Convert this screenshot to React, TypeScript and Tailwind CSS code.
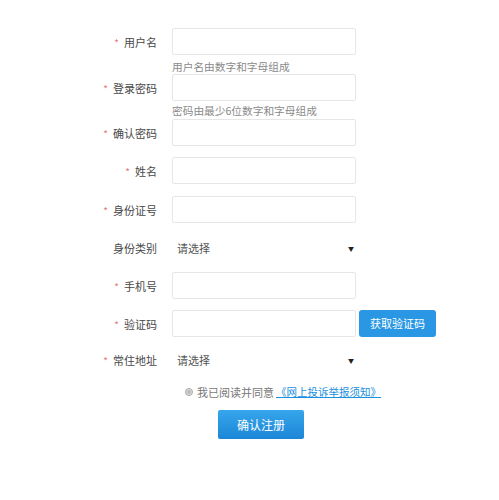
import type { ReactNode } from 'react';

const FONT = { fontFamily: '"Microsoft YaHei", "Noto Sans CJK SC", sans-serif' };

function Label({ text, required = true }: { text: string; required?: boolean }) {
  return (
    <div className="w-[157px] pt-[2px] flex items-center justify-end text-[11px] text-[#484848]">
      {required && <span className="mr-[5px] text-[10px] text-[#e0787a]">*</span>}
      <span>{text}</span>
    </div>
  );
}

function Row({ label, required, mt, children }: { label: string; required?: boolean; mt: string; children: ReactNode }) {
  return (
    <div className={`flex items-center ${mt}`}>
      <Label text={label} required={required} />
      <div className="ml-[15px] flex items-center">{children}</div>
    </div>
  );
}

function Input() {
  return <input className="w-[184px] h-[27px] border border-[#e6e6e6] rounded-[2px] bg-white outline-none" />;
}

function Select() {
  return (
    <div className="w-[184px] h-[27px] pt-[2px] flex items-center justify-between pl-[5px] pr-[2px] text-[11px] text-[#555]">
      <span>请选择</span>
      <span className="text-[6px] text-[#222]">▼</span>
    </div>
  );
}

function Hint({ text, mt }: { text: string; mt: string }) {
  return (
    <div className={`pl-[172px] h-[14px] leading-[14px] text-[10.7px] text-[#8a8a8a] ${mt}`}>{text}</div>
  );
}

export default function App() {
  return (
    <div className="w-[499px] h-[500px] bg-white pt-[28px]" style={FONT}>
      <Row label="用户名" mt="mt-0">
        <Input />
      </Row>
      <Hint text="用户名由数字和字母组成" mt="mt-[5px]" />
      <Row label="登录密码" mt="mt-0">
        <Input />
      </Row>
      <Hint text="密码由最少6位数字和字母组成" mt="mt-[3px]" />
      <Row label="确认密码" mt="mt-[1px]">
        <Input />
      </Row>
      <Row label="姓名" mt="mt-[11px]">
        <Input />
      </Row>
      <Row label="身份证号" mt="mt-[12px]">
        <Input />
      </Row>
      <Row label="身份类别" required={false} mt="mt-[11px]">
        <Select />
      </Row>
      <Row label="手机号" mt="mt-[11px]">
        <Input />
      </Row>
      <Row label="验证码" mt="mt-[11px]">
        <Input />
        <button className="ml-[3px] w-[77px] h-[27px] rounded-[3px] bg-[#2997e3] text-white text-[11px]">
          获取验证码
        </button>
      </Row>
      <Row label="常住地址" mt="mt-[9px]">
        <Select />
      </Row>
      <div className="mt-[11px] h-[16px] flex items-center pl-[185px] text-[11px]">
        <span className="w-[8px] h-[8px] rounded-full border border-[#aaa] bg-[#ddd] flex items-center justify-center">
          <span className="w-[4px] h-[4px] rounded-full bg-[#bbb]" />
        </span>
        <span className="ml-[4px] text-[#777]">我已阅读并同意</span>
        <a className="ml-[2px] text-[10.5px] text-[#1a8fe0] underline">《网上投诉举报须知》</a>
      </div>
      <button className="mt-[10px] ml-[218px] w-[86px] h-[29px] rounded-[2px] bg-gradient-to-b from-[#36a6ec] to-[#1b86d6] text-white text-[12px]">
        确认注册
      </button>
    </div>
  );
}
